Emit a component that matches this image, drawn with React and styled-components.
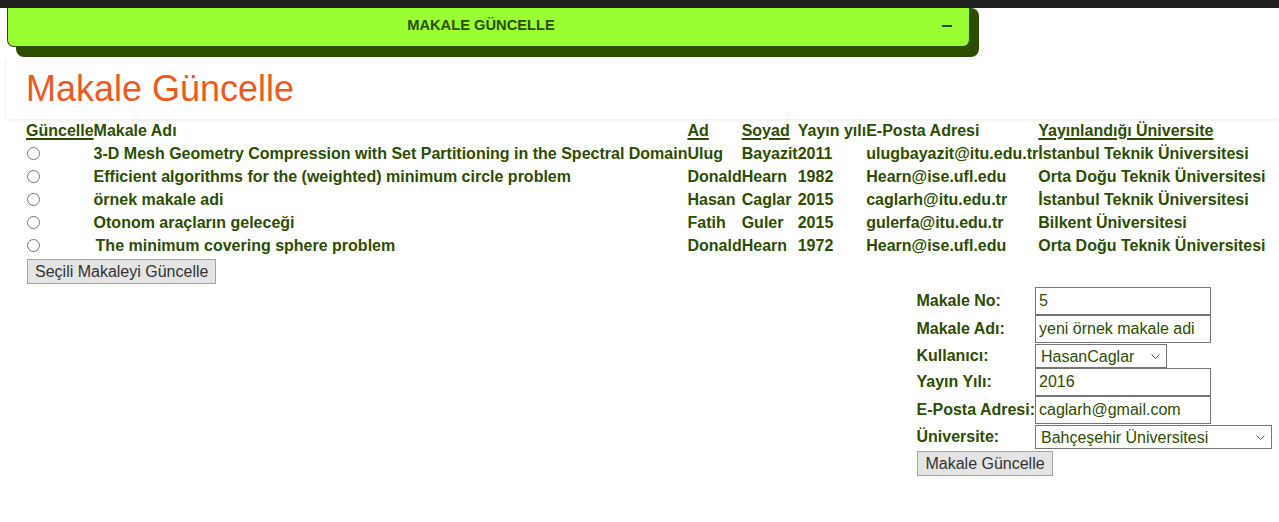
import React from "react";
import styled, { createGlobalStyle } from "styled-components";

const GREEN = "#2b4e00";

const articles = [
    { title: "3-D Mesh Geometry Compression with Set Partitioning in the Spectral Domain", ad: "Ulug", soyad: "Bayazit", yil: "2011", mail: "ulugbayazit@itu.edu.tr", uni: "İstanbul Teknik Üniversitesi" },
    { title: "Efficient algorithms for the (weighted) minimum circle problem", ad: "Donald", soyad: "Hearn", yil: "1982", mail: "Hearn@ise.ufl.edu", uni: "Orta Doğu Teknik Üniversitesi" },
    { title: "örnek makale adi", ad: "Hasan", soyad: "Caglar", yil: "2015", mail: "caglarh@itu.edu.tr", uni: "İstanbul Teknik Üniversitesi" },
    { title: "Otonom araçların geleceği", ad: "Fatih", soyad: "Guler", yil: "2015", mail: "gulerfa@itu.edu.tr", uni: "Bilkent Üniversitesi" },
    { title: "The minimum covering sphere problem", ad: "Donald", soyad: "Hearn", yil: "1972", mail: "Hearn@ise.ufl.edu", uni: "Orta Doğu Teknik Üniversitesi", indent: true },
];

const chevron =
    "url(\"data:image/svg+xml;utf8,<svg xmlns='http://www.w3.org/2000/svg' width='9' height='5' viewBox='0 0 9 5'><path d='M0.5 0.5 L4.5 4.5 L8.5 0.5' fill='none' stroke='%23555' stroke-width='1'/></svg>\")";

function App() {
    return (
        <>
            <GlobalStyle />
            <TopBar />
            <PanelShadow>
                <Panel>
                    <PanelTitle>MAKALE GÜNCELLE</PanelTitle>
                    <Minus />
                </Panel>
            </PanelShadow>
            <Card>
                <Heading>Makale Güncelle</Heading>
            </Card>
            <Content>
                <ListTable>
                    <thead>
                        <tr>
                            <Th><Sort>Güncelle</Sort></Th>
                            <Th>Makale Adı</Th>
                            <Th><Sort>Ad</Sort></Th>
                            <Th><Sort>Soyad</Sort></Th>
                            <Th>Yayın yılı</Th>
                            <Th>E-Posta Adresi</Th>
                            <Th><Sort>Yayınlandığı Üniversite</Sort></Th>
                        </tr>
                    </thead>
                    <tbody>
                        {articles.map((a, i) => (
                            <tr key={i}>
                                <Td><Radio type="radio" name="makale" /></Td>
                                <Td $indent={a.indent}>{a.title}</Td>
                                <Td>{a.ad}</Td>
                                <Td>{a.soyad}</Td>
                                <Td>{a.yil}</Td>
                                <Td>{a.mail}</Td>
                                <Td>{a.uni}</Td>
                            </tr>
                        ))}
                    </tbody>
                </ListTable>
                <Button $top={2}>Seçili Makaleyi Güncelle</Button>

                <FormWrap>
                    <FormGrid>
                        <Label>Makale No:</Label>
                        <Input defaultValue="5" />
                        <Label>Makale Adı:</Label>
                        <Input defaultValue="yeni örnek makale adi" />
                        <Label>Kullanıcı:</Label>
                        <Select $width={132} defaultValue="HasanCaglar">
                            <option>HasanCaglar</option>
                            <option>UlugBayazit</option>
                            <option>DonaldHearn</option>
                        </Select>
                        <Label>Yayın Yılı:</Label>
                        <Input defaultValue="2016" />
                        <Label>E-Posta Adresi:</Label>
                        <Input defaultValue="caglarh@gmail.com" />
                        <Label>Üniversite:</Label>
                        <Select $width={237} defaultValue="Bahçeşehir Üniversitesi">
                            <option>Bahçeşehir Üniversitesi</option>
                            <option>İstanbul Teknik Üniversitesi</option>
                            <option>Bilkent Üniversitesi</option>
                        </Select>
                        <FormButtonCell>
                            <Button $top={2}>Makale Güncelle</Button>
                        </FormButtonCell>
                    </FormGrid>
                </FormWrap>
            </Content>
        </>
    );
}

const GlobalStyle = createGlobalStyle`
    body {
        margin: 0;
        background: #fff;
        font-family: "Liberation Sans", Arial, sans-serif;
        color: ${GREEN};
    }
`;

const TopBar = styled.div`
    height: 8px;
    background: #212121;
`;

const PanelShadow = styled.div`
    position: relative;
    z-index: 1;
    margin-left: 16px;
    width: 963px;
    height: 49px;
    background: ${GREEN};
    border-radius: 0 8px 8px 8px;
`;

const Panel = styled.div`
    display: flex;
    align-items: center;
    box-sizing: border-box;
    margin-left: -9px;
    width: 963px;
    height: 39px;
    padding: 0 18px 4px 12px;
    background: #99ff33;
    border: 1px solid ${GREEN};
    border-top: none;
    border-radius: 0 0 7px 7px;
`;

const PanelTitle = styled.div`
    flex: 1;
    text-align: center;
    font-size: 14.7px;
    font-weight: bold;
    color: ${GREEN};
`;

const Minus = styled.span`
    width: 10px;
    height: 2px;
    margin: 1px -1px 0 0;
    background: ${GREEN};
`;

const Card = styled.div`
    margin-left: 6px;
    padding: 11px 20px 9px;
    background: #fff;
    border-radius: 0 0 4px 4px;
    box-shadow: 0 2px 3px rgba(0, 0, 0, 0.06), -1px 0 1px rgba(0, 0, 0, 0.03);
`;

const Heading = styled.h1`
    margin: 0;
    font-size: 36px;
    font-weight: normal;
    color: #ec5b1f;
`;

const Content = styled.div`
    padding: 0 7px 0 26px;
`;

const ListTable = styled.table`
    border-collapse: collapse;
    border-spacing: 0;
    font-size: 16px;
    font-weight: bold;
`;

const Th = styled.th`
    height: 23px;
    padding: 0;
    text-align: left;
    white-space: nowrap;
    vertical-align: middle;
`;

const Td = styled.td`
    height: 23px;
    padding: 0 0 0 ${(p) => (p.$indent ? 2 : 0)}px;
    white-space: nowrap;
    vertical-align: middle;
`;

const Sort = styled.span`
    text-decoration: underline;
    text-decoration-thickness: 2px;
    text-underline-offset: 2px;
`;

const Radio = styled.input`
    display: block;
    width: 13px;
    height: 13px;
    margin: 0 0 0 1px;
`;

const Button = styled.button`
    display: block;
    margin: ${(p) => p.$top}px 0 0 1px;
    padding: 2px 7px;
    height: 25px;
    font-family: inherit;
    font-size: 16px;
    color: #333;
    background: #e4e4e4;
    border: 1px solid #a3a3a3;
    border-radius: 0;
`;

const FormWrap = styled.div`
    display: flex;
    justify-content: flex-end;
    margin-top: 3px;
`;

const FormGrid = styled.div`
    display: grid;
    grid-template-columns: auto auto;
    align-items: center;
    justify-items: start;
`;

const Label = styled.label`
    font-size: 16px;
    font-weight: bold;
    white-space: nowrap;
`;

const Input = styled.input`
    box-sizing: border-box;
    width: 176px;
    height: 28px;
    margin: 0;
    padding: 2px 3px;
    font-family: inherit;
    font-size: 16px;
    color: ${GREEN};
    border: 1px solid #767676;
    border-radius: 0;
    outline: none;
`;

const Select = styled.select`
    appearance: none;
    box-sizing: border-box;
    width: ${(p) => p.$width}px;
    height: 24px;
    margin: 1px 0 0;
    padding: 0 20px 0 5px;
    font-family: inherit;
    font-size: 16px;
    color: ${GREEN};
    background: #fff ${chevron} no-repeat right 6px center;
    border: 1px solid #767676;
    border-radius: 0;
`;

const FormButtonCell = styled.div`
    grid-column: 1 / span 2;
`;

export default App;
